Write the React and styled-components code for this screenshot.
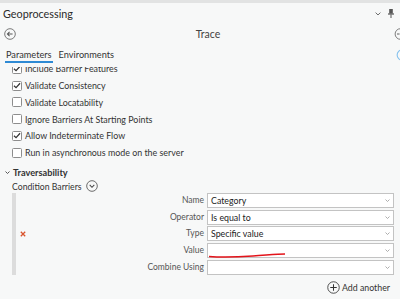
import React from "react";
import styled, { createGlobalStyle } from "styled-components";

const GlobalStyle = createGlobalStyle`
  html, body {
    margin: 0;
    padding: 0;
    background: #f7f8f8;
    font-family: Lato, "Open Sans", sans-serif;
    color: #333;
  }
`;

const Pane = styled.div`
  width: 400px;
  height: 299px;
  overflow: hidden;
  background: #f7f8f8;
  border-top: 3px solid #e2e3e3;
  box-sizing: border-box;
  position: relative;
`;

const TitleBar = styled.div`
  display: flex;
  align-items: center;
  height: 21px;
  padding: 0 6px 0 3px;
`;

const Title = styled.div`
  font-size: 10.8px;
  flex: 1;
  color: #2b2b2b;
`;

const TitleIcons = styled.div`
  display: flex;
  gap: 7px;
  align-items: center;
`;

const ToolBar = styled.div`
  display: flex;
  align-items: center;
  height: 19px;
  padding: 0 0 0 4px;
`;

const ToolName = styled.div`
  flex: 1;
  text-align: center;
  font-size: 10.5px;
  color: #444;
  padding-left: 6px;
`;

const Tabs = styled.div`
  display: flex;
  gap: 5px;
  padding: 6px 0 0 5px;
  height: 24px;
  box-sizing: border-box;
  position: relative;
  z-index: 1;
  background: #f7f8f8;
`;

const Tab = styled.div`
  font-size: 9.2px;
  line-height: 12px;
  color: #333;
  height: 14px;
  padding: 0 1px;
  box-sizing: border-box;
  border-bottom: 2px solid ${(p) => (p.$active ? "#2e8ad4" : "transparent")};
`;

const Body = styled.div`
  margin-top: -6.6px;
`;

const CheckList = styled.div`
  display: flex;
  flex-direction: column;
  padding-left: 12px;
`;

const CheckRow = styled.div`
  display: flex;
  align-items: center;
  gap: 3px;
  height: 16.8px;
  font-size: 8.9px;
  color: #333;
`;

const Box = styled.span`
  width: 10px;
  height: 10px;
  box-sizing: border-box;
  border: 1px solid #8d8d8d;
  border-radius: 1.5px;
  background: #fff;
  display: flex;
  align-items: center;
  justify-content: center;
`;

const Section = styled.div`
  display: flex;
  align-items: center;
  gap: 3px;
  margin-top: 4px;
  padding-left: 5px;
  height: 14px;
  font-size: 9.2px;
  font-weight: 700;
  color: #333;
`;

const SubHead = styled.div`
  display: flex;
  align-items: center;
  gap: 4px;
  padding-left: 12px;
  height: 14px;
  font-size: 8.7px;
  color: #333;
`;

const Group = styled.div`
  display: flex;
  margin-left: 12px;
`;

const GroupBar = styled.div`
  width: 4px;
  background: #dcdcdc;
`;

const Remove = styled.div`
  width: 14px;
  display: flex;
  align-items: center;
  justify-content: center;
`;

const Fields = styled.div`
  flex: 1;
  display: grid;
  grid-template-columns: 1fr 187px;
  column-gap: 3px;
  row-gap: 1.6px;
  padding-right: 6px;
`;

const Label = styled.div`
  text-align: right;
  font-size: 8.5px;
  color: #555;
  line-height: 15px;
`;

const Select = styled.div`
  position: relative;
  height: 15px;
  box-sizing: border-box;
  border: 1px solid #c3c3c3;
  background: #fff;
  display: flex;
  align-items: center;
  padding-left: 3px;
  font-size: 8.8px;
  color: #222;
`;

const Caret = styled.span`
  position: absolute;
  right: 3px;
  top: 5px;
  display: flex;
`;

const Scribble = styled.svg`
  position: absolute;
  left: 0;
  top: 8px;
`;

const AddRow = styled.div`
  display: flex;
  justify-content: flex-end;
  align-items: center;
  gap: 2px;
  padding: 6px 10px 0 0;
  font-size: 8.8px;
  color: #333;
`;

const Check = () => (
  <svg width="8" height="7" viewBox="0 0 9 8">
    <path d="M1 4.2 L3.4 6.4 L8 1.4" fill="none" stroke="#333" strokeWidth="1.4" />
  </svg>
);

const Chevron = ({ size = 7, color = "#888", width = 1.4 }) => (
  <svg width={size} height={size * 0.6} viewBox="0 0 10 6">
    <path d="M1 1 L5 5 L9 1" fill="none" stroke={color} strokeWidth={width} />
  </svg>
);

const CircleIcon = ({ children, color = "#555", size = 13 }) => (
  <svg width={size} height={size} viewBox="0 0 14 14">
    <circle cx="7" cy="7" r="6.2" fill="none" stroke={color} strokeWidth="1" />
    {children}
  </svg>
);

const checks = [
  ["Include Barrier Features", true],
  ["Validate Consistency", true],
  ["Validate Locatability", false],
  ["Ignore Barriers At Starting Points", false],
  ["Allow Indeterminate Flow", true],
  ["Run in asynchronous mode on the server", false],
];

const fields = [
  ["Name", "Category"],
  ["Operator", "Is equal to"],
  ["Type", "Specific value"],
  ["Value", "", true],
  ["Combine Using", ""],
];

export default function App() {
  return (
    <Pane>
      <GlobalStyle />
      <TitleBar>
        <Title>Geoprocessing</Title>
        <TitleIcons>
          <Chevron size={6} color="#666" width={1.6} />
          <svg width="6" height="9" viewBox="0 0 6 9">
            <rect x="1.2" y="0" width="3.6" height="4.6" fill="#555" />
            <rect x="0" y="4.4" width="6" height="1.2" fill="#555" />
            <rect x="2.5" y="5.5" width="1" height="3.5" fill="#555" />
          </svg>
        </TitleIcons>
      </TitleBar>
      <ToolBar>
        <CircleIcon color="#666" size={12}>
          <path d="M10 7 H4 M6.5 4.5 L4 7 L6.5 9.5" fill="none" stroke="#555" strokeWidth="1.2" />
        </CircleIcon>
        <ToolName>Trace</ToolName>
        <svg width="6" height="12" viewBox="0 0 6 14">
          <circle cx="7" cy="7" r="6.2" fill="none" stroke="#777" strokeWidth="1.1" />
          <path d="M3 7 H6" stroke="#666" strokeWidth="1.2" />
        </svg>
      </ToolBar>
      <Tabs>
        <Tab $active>Parameters</Tab>
        <Tab>Environments</Tab>
        <svg style={{ position: "absolute", right: 0, top: 6 }} width="4" height="12" viewBox="0 0 4 14">
          <circle cx="7" cy="7" r="6" fill="none" stroke="#86c2ee" strokeWidth="1.3" />
        </svg>
      </Tabs>
      <Body>
        <CheckList>
          {checks.map(([text, on]) => (
            <CheckRow key={text}>
              <Box>{on && <Check />}</Box>
              {text}
            </CheckRow>
          ))}
        </CheckList>
        <Section>
          <Chevron size={5} color="#444" width={1.8} />
          Traversability
        </Section>
        <SubHead>
          Condition Barriers
          <CircleIcon color="#555" size={12}>
            <path d="M4.3 5.8 L7 8.5 L9.7 5.8" fill="none" stroke="#444" strokeWidth="1.2" />
          </CircleIcon>
        </SubHead>
        <Group>
          <GroupBar />
          <Remove>
            <svg width="6" height="6" viewBox="0 0 6 6">
              <path d="M0.8 0.8 L5.2 5.2 M5.2 0.8 L0.8 5.2" stroke="#d9542e" strokeWidth="1.3" />
            </svg>
          </Remove>
          <Fields>
            {fields.map(([label, value, mark]) => (
              <React.Fragment key={label}>
                <Label>{label}</Label>
                <Select>
                  {value}
                  {mark && (
                    <Scribble width="78" height="6" viewBox="0 0 78 6">
                      <path d="M1 4.5 C15 5.5 30 5 45 4 S70 2 77 2" fill="none" stroke="#e3141b" strokeWidth="1.5" />
                    </Scribble>
                  )}
                  <Caret>
                    <Chevron size={5} color="#999" width={1.6} />
                  </Caret>
                </Select>
              </React.Fragment>
            ))}
          </Fields>
        </Group>
        <AddRow>
          <CircleIcon color="#444" size={13}>
            <path d="M7 3.5 V10.5 M3.5 7 H10.5" stroke="#333" strokeWidth="1.1" />
          </CircleIcon>
          Add another
        </AddRow>
      </Body>
    </Pane>
  );
}
